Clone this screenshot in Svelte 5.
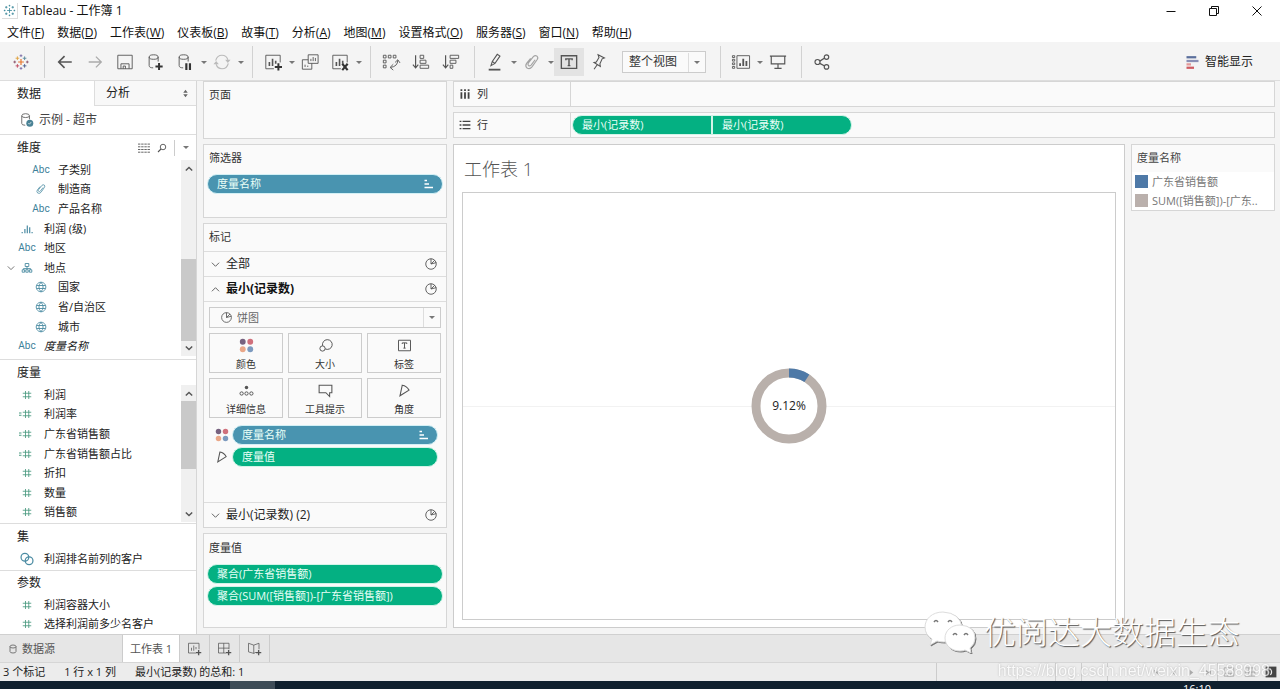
<script>
  const menus = [
    ['文件', 'F'], ['数据', 'D'], ['工作表', 'W'], ['仪表板', 'B'], ['故事', 'T'], ['分析', 'A'],
    ['地图', 'M'], ['设置格式', 'O'], ['服务器', 'S'], ['窗口', 'N'], ['帮助', 'H']
  ];
  const toolbar = [
    'logo', '|', 'back', 'forward', 'save', 'dbadd', 'dbpause', 'v', 'refresh', 'v', '|',
    'chartadd', 'v', 'duplicate', 'chartclear', 'v', '|', 'swap', 'sortasc', 'sortdesc', '|',
    'pen', 'v', 'clip', 'v', 'label', 'pin'
  ];
  const dimensions = [
    ['abc', '子类别', 1], ['clip', '制造商', 1], ['abc', '产品名称', 1], ['bins', '利润 (级)', 0],
    ['abc', '地区', 0], ['tree', '地点', 0], ['globe', '国家', 1], ['globe', '省/自治区', 1],
    ['globe', '城市', 1], ['abc', '度量名称', 0]
  ];
  const measures = [
    ['hash', '利润'], ['calc', '利润率'], ['calc', '广东省销售额'], ['calc', '广东省销售额占比'],
    ['hash', '折扣'], ['hash', '数量'], ['hash', '销售额']
  ];
  const marks = [
    ['colors', '颜色'], ['size', '大小'], ['text', '标签'],
    ['detail', '详细信息'], ['tooltip', '工具提示'], ['angle', '角度']
  ];
</script>

{#snippet icon(name)}
  <svg class="icon {name}" viewBox="0 0 20 20" aria-hidden="true">
    {#if name === 'logo'}
      <path stroke="#e8762d" stroke-width="1.3" d="M10 6.8v6.4M6.8 10h6.4" />
      <path stroke="#c14a60" d="M6 12.3v4M4 14.3h4" />
      <path stroke="#e0a23c" d="M6 3.8v4M4 5.8h4" />
      <path stroke="#59879b" d="M14 3.8v4M12 5.8h4" />
      <path stroke="#4c5c8c" d="M14 12.3v4M12 14.3h4" />
      <path stroke="#7a6aa5" d="M10 1.5v3M8.5 3h3M10 15.6v3M8.5 17.1h3" />
      <path stroke="#8a5168" d="M3 8.5v3M1.5 10h3M17 8.5v3M15.500 10h3" />
    {:else if name === 'back'}
      <path stroke-width="1.8" d="M17.500 10H3M9.500 3.500L3 10l6.500 6.500" />
    {:else if name === 'forward'}
      <path stroke="#aaa" stroke-width="1.400" d="M3 10h13.500M11 4l6 6-6 6" />
    {:else if name === 'save'}
      <path d="M2 2.500h16v15H2zM5.500 17.500v-5.500h9v5.500M8 17.500v-3h2.500v3" />
    {:else if name === 'dbadd' || name === 'dbpause'}
      <path d="M3.500 4.500v9.500q0 2.500 4.500 2.500M3.500 4.500q0-2.500 5-2.500t5 2.500q0 2.500-5 2.500t-5-2.500M13.500 4.500v5" />
      {#if name === 'dbadd'}
        <path stroke="#333" stroke-width="2.200" d="M14.500 11v8M10.500 15h8" />
      {:else}
        <path stroke="#333" stroke-width="2.400" d="M11.500 11.500v7.500M15.500 11.500v7.500" />
      {/if}
    {:else if name === 'refresh'}
      <path stroke="#bbb" stroke-width="1.300" d="M3 8.500Q4.500 2.500 10 2.500q5 0 6.500 5M17 11.500q-1.500 6-7 6-5 0-6.500-5" />
      <path fill="#bbb" stroke="none" d="M13.500 7.500h6l-3 3.500zM.5 12.500h6L3.500 9z" />
    {:else if name === 'chartadd' || name === 'chartclear'}
      <path d="M11 17.500H2V2.500h16v8" />
      <path stroke-width="1.800" d="M6 10v4.500M9.500 6.500v8M13 8.500V12" />
      {#if name === 'chartadd'}
        <path stroke="#333" stroke-width="2.200" d="M16 11.500v8M12 15.500h8" />
      {:else}
        <path stroke="#333" stroke-width="2.400" d="M12.500 12l6 7M18.500 12l-6 7" />
      {/if}
    {:else if name === 'duplicate'}
      <path d="M8 2h11v9.500H8zM8 7.500H1.500v10.500h10.500v-6.500M4.500 13v2.500M7.500 14v1.500M11 6.500V9M13.500 4.500V9M16 5.500V9" />
    {:else if name === 'swap'}
      <path d="M1.500 2.500h3v3h-3zM7 2.500h3v3H7zM12.500 2.500h3v3h-3zM1.500 8h3v3h-3zM1.500 13.500h3v3h-3zM17.500 8q0 7-8 8M14.500 10.500l3-3L20 11M12.500 12.500L9 16l3.500 3" />
    {:else if name === 'sortasc'}
      <path stroke-width="1.300" d="M4 2.500v14M1 13l3 3.500L7 13" />
      <path d="M9 2.500h4v3.500H9zM9 8h6.500v3.500H9zM9 13.500h9.500V17H9z" />
    {:else if name === 'sortdesc'}
      <path stroke-width="1.300" d="M4 2.500v14M1 13l3 3.500L7 13" />
      <path d="M9 2.500h9.500V6H9zM9 8h6.500v3.500H9zM9 13.500h3V17H9z" />
    {:else if name === 'pen'}
      <path stroke-width="1.200" d="M5.500 14l1.500-4.500L12.500 1.500l3 2L10 11.500zM7 9.500l3 2" />
      <path stroke-width="2" d="M3 18.500h13" />
    {:else if name === 'clip'}
      <path stroke-width="1.300" d="M13.500 7.500L9 13.500q-1.500 1.500-3 .3-1-1.300 0-2.800l5.500-7Q13.500 2 15.500 3.500q1.700 1.500.3 3.700L10 15.500q-2.500 3-5.500 1.200-2.500-2.200-.5-5.200L8.500 6" />
    {:else if name === 'label'}
      <path stroke-width="1.500" d="M1.500 3h17v14h-17z" />
      <path stroke-width="1.600" d="M6.500 8V6.500h7V8M10 6.500v7.500M8.500 14h3" />
    {:else if name === 'pin'}
      <path stroke-width="1.200" d="M9 2l7 3.500-2.500 1-2.500 5.500.5 3L4.500 10.500l2.500-.5 3-5zM8 13L4.500 18" />
    {:else if name === 'cards'}
      <path d="M5.500 3h14v14h-14zM.5 3H3v2H.5zM.5 7H3v2H.5zM.5 11H3v2H.5zM.5 15H3v2H.5z" />
      <path stroke-width="2" d="M9 11.500V14.500M12.500 6.500v8M16 9v5.500" />
    {:else if name === 'present'}
      <path stroke-width="1.300" d="M1 3.500h18M2.500 3.500v8.500h15V3.500M10 12v5M6 17h8" />
    {:else if name === 'share'}
      <circle cx="5" cy="10" r="2.800" stroke-width="1.300" /><circle cx="15" cy="4.500" r="2.500" stroke-width="1.300" /><circle cx="15" cy="15.500" r="2.500" stroke-width="1.300" />
      <path stroke-width="1.400" d="M7.500 9L13 5.500M7.500 11.500l5.500 3" />
    {:else if name === 'smart'}
      <path stroke="#5b6f9c" stroke-width="3" d="M2 3h13" />
      <path stroke="#8a8fb5" stroke-width="3" d="M2 8h16" />
      <path stroke="#e39a9a" stroke-width="3" d="M2 12.500h6" />
      <path stroke="#cf5b62" stroke-width="3" d="M2 17h10" />
    {:else if name === 'source'}
      <path stroke="#666" stroke-width="1.300" d="M2.500 4v11q0 2.500 5 2.500M2.500 4q0-3 5.500-3t5.500 3q0 2.500-5.500 2.500T2.500 4M13.500 4v5" />
      <circle cx="14" cy="14.500" r="5" fill="#4a8295" stroke="none" /><path stroke="#fff" d="M12 14.500l1.500 1.500 2.500-3" />
    {:else if name === 'bins'}
      <path stroke-width="2" d="M6.500 10v7M10.500 4v13M14.500 7v10M2 15.200V17M18.500 15.200V17" />
    {:else if name === 'tree'}
      <path stroke-width="1.500" d="M7 2.500h6v5H7zM10 7.500V11M4 13v-2h12v2M2 13h4v4H2zM8 13h4v4H8zM14 13h4v4h-4zM10 11v2" />
    {:else if name === 'globe'}
      <path stroke-width="1.500" d="M10 2a8 8 0 1 0 .1 0M2.500 7.500h15M2.500 12.500h15M10 2Q3 10 10 18M10 2q7 8 0 16" />
    {:else if name === 'hash' || name === 'calc'}
      <path stroke-width="1.700" d="M7 2v16M13.500 2v16M1.500 6.500h17M1.500 13.500h17" />
      {#if name === 'calc'}<path stroke-width="2" d="M-6 8h5M-6 12.500h5" />{/if}
    {:else if name === 'set'}
      <circle cx="7" cy="7.500" r="5.500" stroke-width="1.800" /><circle cx="13" cy="12.500" r="5.500" stroke-width="1.800" />
    {:else if name === 'pie'}
      <circle cx="10" cy="10" r="7.500" stroke-width="1.300" /><path stroke-width="1.300" d="M10 2.500V10l5.500-5.500M10 10l7.500-2" />
    {:else if name === 'colors'}
      <circle cx="5" cy="5" r="3.900" fill="#77627f" stroke="none" /><circle cx="15" cy="5" r="3.900" fill="#d0707c" stroke="none" />
      <circle cx="5" cy="15" r="3.900" fill="#eaa788" stroke="none" /><circle cx="15" cy="15" r="3.900" fill="#7c9abf" stroke="none" />
    {:else if name === 'size'}
      <path stroke-width="1.300" d="M6.200 10.500A6.500 6.500 0 1 1 9.500 14.500" /><circle cx="6" cy="14" r="3.500" stroke-width="1.300" />
    {:else if name === 'text'}
      <path stroke-width="1.300" d="M2 3h16v14H2zM7 8V6.500h6V8M10 6.500v7M8.500 13.500h3" />
    {:else if name === 'detail'}
      <circle cx="10" cy="6" r="2.300" fill="#555" stroke="none" />
      <circle cx="3.500" cy="14" r="2.200" stroke-width="1.300" /><circle cx="10" cy="14" r="2.200" stroke-width="1.300" /><circle cx="16.500" cy="14" r="2.200" stroke-width="1.300" />
    {:else if name === 'tooltip'}
      <path stroke-width="1.400" d="M1.500 3h17v10h-3v5l-5-5h-9z" />
    {:else if name === 'angle'}
      <path stroke-width="1.500" d="M7 3L4 17 16 9.500Q13 4 7 3z" />
    {:else if name === 'sorted'}
      <path stroke="#fff" stroke-width="3" d="M3 3h5M3 10h9M3 17h17" />
    {:else if name === 'columns'}
      <path stroke="#444" stroke-width="3" d="M4 7v11M10 7v11M16 7v11M4 2v3M10 2v3M16 2v3" />
    {:else if name === 'rows'}
      <path stroke="#444" stroke-width="2.200" d="M6 4h13M6 10h13M6 16h13M1 4h3M1 10h3M1 16h3" />
    {:else if name === 'grid'}
      <path stroke-width="1.500" stroke-dasharray="4 1.300" d="M0 3.500h20M0 8h20M0 12.500h20M0 17h20" />
    {:else if name === 'find'}
      <circle cx="12" cy="8" r="5.500" stroke-width="1.800" /><path stroke-width="2.200" d="M8 12l-6 6" />
    {:else if name === 'updown'}
      <path fill="#666" stroke="none" d="M5 8.500l5-7 5 7zM5 11.500h10l-5 7z" />
    {:else if name === 'down'}
      <path stroke-width="2" d="M2 6l8 8 8-8" />
    {:else if name === 'up'}
      <path stroke-width="2" d="M2 14l8-8 8 8" />
    {:else if name === 'cylinder'}
      <path stroke-width="1.500" d="M4 5v10q0 3 6 3t6-3V5q0-3-6-3T4 5q0 3 6 3t6-3" />
    {:else if name === 'newsheet'}
      <path d="M12 16H2V3h14v8M6 9v4M9 6v7M12 8v3" /><path stroke-width="1.800" d="M15.500 12v7M12 15.500h7" />
    {:else if name === 'newdash'}
      <path d="M12 16H2V3h14v8M9 3v13M2 9.500h14" /><path stroke-width="1.800" d="M15.500 12v7M12 15.500h7" />
    {:else if name === 'newstory'}
      <path d="M12 15l-3 1.500L2 14.500V3l7 2.500L16 3v8M9 5.500v11" /><path stroke-width="1.800" d="M15.500 12v7M12 15.500h7" />
    {:else if name === 'first'}
      <path fill="#aaa" stroke="none" d="M3 3h3v14H3zM17 3v14L7 10z" />
    {:else if name === 'previous'}
      <path fill="#aaa" stroke="none" d="M15 2v16L5 10z" />
    {:else if name === 'next'}
      <path fill="#aaa" stroke="none" d="M5 2v16l10-8z" />
    {:else if name === 'final'}
      <path fill="#aaa" stroke="none" d="M14 3h3v14h-3zM3 3v14l10-7z" />
    {:else if name === 'sorter'}
      <path stroke="#888" d="M2 3h16v14H2zM2 10h16M8 3v14M13 3v14" />
    {:else if name === 'film'}
      <path stroke="#888" d="M2 3h16v14H2zM2 12h16M8 12v5M13 12v5" />
    {:else if name === 'stack'}
      <path stroke="none" fill="#444" d="M1 1h18v18H1z" /><path stroke="#eee" stroke-width="2" d="M3 5h6q4 5 0 10" />
    {/if}
  </svg>
{/snippet}

{#snippet scroller(before, thumb, after)}
  <div class="scroller">
    {@render icon('up')}
    <div class="track">
      <span style:flex-grow={before}></span>
      <span class="thumb" style:flex-grow={thumb}></span>
      <span style:flex-grow={after}></span>
    </div>
    {@render icon('down')}
  </div>
{/snippet}

{#snippet field(kind, name, nested)}
  <li class:nested class:italic={name === '度量名称'}>
    {#if kind === 'tree'}<span class="expander">{@render icon('down')}</span>{/if}
    <span class="kind" class:green={kind === 'hash' || kind === 'calc'}>
      {#if kind === 'abc'}Abc{:else}{@render icon(kind)}{/if}
    </span>
    {name}
  </li>
{/snippet}

<div class="app">
  <header class="title">
    <span class="appicon">
      <svg viewBox="0 0 16 16" aria-hidden="true"><path stroke="#3f8a9c" d="M8 5v6M5 8h6M4 2.500v3M2.500 4h3M12 2.500v3M10.500 4h3M4 10.500v3M2.500 12h3M12 10.500v3M10.500 12h3M8 1v2M7 2h2M8 13v2M7 14h2M2 7v2M1 8h2M14 7v2M13 8h2" /></svg>
    </span>
    <span>Tableau - 工作簿 1</span>
    <div class="window">
      <button aria-label="最小化"><svg viewBox="0 0 12 12"><path d="M1.500 6.500h9" /></svg></button>
      <button aria-label="还原"><svg viewBox="0 0 12 12"><path d="M1.500 3.500h7v7h-7zM3.500 3.500v-2h7v7h-2" /></svg></button>
      <button aria-label="关闭"><svg viewBox="0 0 12 12"><path d="M1.500 1.500l9 9M10.500 1.500l-9 9" /></svg></button>
    </div>
  </header>

  <nav class="menu">
    {#each menus as [name, key]}
      <button>{name}(<u>{key}</u>)</button>
    {/each}
  </nav>

  <div class="toolbar">
    {#each toolbar as item}
      {#if item === '|'}
        <span class="sep"></span>
      {:else if item === 'v'}
        <span class="caret"></span>
      {:else}
        <button class="tool" class:active={item === 'label'} class:faded={item === 'clip'} aria-label={item}>{@render icon(item)}</button>
      {/if}
    {/each}
    <div class="select fit">
      <select aria-label="适合"><option>整个视图</option></select>
      <span class="caret"></span>
    </div>
    <span class="sep wide"></span>
    <button class="tool" aria-label="显示/隐藏功能区">{@render icon('cards')}</button>
    <span class="caret"></span>
    <button class="tool" aria-label="演示模式">{@render icon('present')}</button>
    <span class="sep"></span>
    <button class="tool" aria-label="共享">{@render icon('share')}</button>
    <button class="smartshow">{@render icon('smart')}智能显示</button>
  </div>

  <div class="workspace">
    <aside class="data">
      <div class="panes">
        <button class="on">数据</button>
        <button>分析 {@render icon('updown')}</button>
      </div>
      <div class="datasource">{@render icon('source')}示例 - 超市</div>
      <section class="dims">
        <div class="heading">
          <h2>维度</h2>
          <span class="tools">{@render icon('grid')}{@render icon('find')}<i></i><span class="caret"></span></span>
        </div>
        <div class="list">
          <ul>
            {#each dimensions as [kind, name, nested]}{@render field(kind, name, !!nested)}{/each}
          </ul>
          {@render scroller(83, 83, 0)}
        </div>
      </section>
      <section class="meas">
        <div class="heading"><h2>度量</h2></div>
        <div class="list">
          <ul>
            {#each measures as [kind, name]}{@render field(kind, name, false)}{/each}
          </ul>
          {@render scroller(0, 67, 38)}
        </div>
      </section>
      <section class="sets">
        <div class="heading"><h2>集</h2></div>
        <div class="list"><ul>{@render field('set', '利润排名前列的客户', false)}</ul></div>
      </section>
      <section class="params">
        <div class="heading"><h2>参数</h2></div>
        <div class="list">
          <ul>
            {@render field('hash', '利润容器大小', false)}
            {@render field('hash', '选择利润前多少名客户', false)}
          </ul>
        </div>
      </section>
    </aside>

    <div class="shelves">
      <section class="card pages"><h3>页面</h3></section>
      <section class="card filters">
        <h3>筛选器</h3>
        <button class="pill blue">度量名称{@render icon('sorted')}</button>
      </section>
      <section class="card marks">
        <h3>标记</h3>
        <button class="layer">{@render icon('down')}全部{@render icon('pie')}</button>
        <button class="layer current">{@render icon('up')}最小(记录数){@render icon('pie')}</button>
        <div class="body">
          <div class="select type">
            {@render icon('pie')}
            <select aria-label="标记类型"><option>饼图</option></select>
            <span class="caret"></span>
          </div>
          <div class="buttons">
            {#each marks as [kind, name]}
              <button>{@render icon(kind)}{name}</button>
            {/each}
          </div>
          <div class="encodings">
            <div>{@render icon('colors')}<button class="pill blue">度量名称{@render icon('sorted')}</button></div>
            <div>{@render icon('angle')}<button class="pill">度量值</button></div>
          </div>
        </div>
        <button class="layer">{@render icon('down')}最小(记录数) (2){@render icon('pie')}</button>
      </section>
      <section class="card values">
        <h3>度量值</h3>
        <button class="pill">聚合(广东省销售额)</button>
        <button class="pill">聚合(SUM([销售额])-[广东省销售额])</button>
      </section>
    </div>

    <main>
      <div class="shelf"><span class="name">{@render icon('columns')}列</span></div>
      <div class="shelf">
        <span class="name">{@render icon('rows')}行</span>
        <button class="pill start">最小(记录数)</button>
        <button class="pill end">最小(记录数)</button>
      </div>
      <div class="view">
        <section class="sheet">
          <h1>工作表 1</h1>
          <div class="pane">
            <svg class="donut" viewBox="0 0 76 76" role="img" aria-label="9.12%">
              <circle class="rest" cx="38" cy="38" r="33" />
              <circle class="slice" cx="38" cy="38" r="33" pathLength="100" transform="rotate(-90 38 38)" />
              <text x="38" y="42" text-anchor="middle">9.12%</text>
            </svg>
          </div>
        </section>
        <aside class="legend">
          <h3>度量名称</h3>
          <ul>
            <li><i class="navy"></i>广东省销售额</li>
            <li><i class="taupe"></i>SUM([销售额])-[广东..</li>
          </ul>
        </aside>
      </div>
    </main>
  </div>

  <footer>
    <div class="tabs">
      <button class="origin">{@render icon('cylinder')}数据源</button>
      <button class="on">工作表 1</button>
      <button class="new" aria-label="新建工作表">{@render icon('newsheet')}</button>
      <button class="new" aria-label="新建仪表板">{@render icon('newdash')}</button>
      <button class="new" aria-label="新建故事">{@render icon('newstory')}</button>
    </div>
    <div class="status">
      <span>3 个标记</span><span>1 行 x 1 列</span><span>最小(记录数) 的总和: 1</span>
      <div class="nav">
        <b class="user"></b><b></b><b></b>
        <b class="arrows">{@render icon('first')}{@render icon('previous')}{@render icon('next')}{@render icon('final')}</b>
        <b class="modes">{@render icon('film')}{@render icon('sorter')}{@render icon('stack')}</b>
      </div>
    </div>
    <div class="taskbar"><span class="task"></span><time>16:10</time></div>
  </footer>

  <div class="brand">
    <svg viewBox="0 0 52 42" aria-hidden="true">
      <path d="M19 1C8 1 1 8 1 16q0 8 7 12l-2 6 7-4q3 1 7 1 17-1 18-15Q36 2 19 1z" />
      <path d="M36 14c-9 0-15 6-15 13s6 13 15 13q3 0 5-1l6 3-1-5q5-4 5-10 0-12-15-13z" />
      <path class="eyes" d="M10 11q2-3 4 0M24 11q2-3 4 0M29 24q2-3 4 0M40 24q2-3 4 0" />
    </svg>
    <span>优阅达大数据生态</span>
  </div>
  <div class="url">https://blog.csdn.net/weixin_45588998</div>
</div>

<style>
  :global(body) { margin: 0; }
  * { box-sizing: border-box; }
  .app {
    position: relative;
    display: flex;
    flex-direction: column;
    height: 100vh;
    overflow: hidden;
    background: #f4f4f4;
    color: #333;
    font: 11px/16px "Open Sans", "Noto Sans CJK SC", sans-serif;
  }
  button, select { margin: 0; padding: 0; border: 0; background: none; color: inherit; font: inherit; }
  h1, h2, h3, ul { margin: 0; padding: 0; font-weight: 400; list-style: none; }
  svg { flex: none; fill: none; stroke: #555; }
  .icon { display: block; width: 12px; height: 12px; overflow: visible; }

  .title { display: flex; align-items: center; height: 22px; gap: 4px; padding-left: 2px; background: #fff; color: #111; font-size: 12px; }
  .appicon { display: flex; padding: 1px; border: solid #ddd; border-width: 0 1px 1px 0; }
  .appicon svg { width: 13px; height: 13px; }
  .window { display: flex; margin-left: auto; padding-right: 2px; }
  .window button { display: flex; justify-content: center; align-items: center; width: 43px; height: 20px; }
  .window svg { width: 12px; height: 12px; stroke: #111; }

  .menu { display: flex; gap: 13px; height: 20px; padding: 1px 0 0 7px; background: #fff; color: #111; white-space: nowrap; }
  .menu button { font-size: 12px; }
  .toolbar { display: flex; align-items: center; height: 39px; padding: 2px 0 0 6px; border-bottom: 1px solid #ddd; }
  .tool { display: flex; justify-content: center; align-items: center; width: 30px; height: 28px; }
  .tool .icon { width: 18px; height: 18px; }
  .tool.active { background: #e3e3e3; }
  .tool.faded { opacity: .5; }
  .caret { display: flex; justify-content: center; width: 7px; }
  .caret::after { content: ""; border: solid transparent; border-width: 3px 3px 0; border-top-color: #777; }
  .sep { width: 1px; height: 32px; margin: 0 5px 0 8px; background: #d2d2d2; }
  .sep.wide { margin-left: 14px; }
  .select { display: flex; align-items: center; border: 1px solid #ccc; background: #fafafa; }
  .select select { flex: 1; align-self: stretch; min-width: 0; appearance: none; }
  .select > .caret { width: 17px; height: 19px; align-items: center; border-left: 1px solid #ddd; }
  .fit { width: 84px; height: 22px; margin-left: 8px; padding-left: 6px; font-size: 12px; }
  .smartshow { display: flex; align-items: center; gap: 5px; margin-left: auto; padding-right: 27px; color: #222; font-size: 12px; }
  .smartshow .icon { width: 15px; height: 15px; }

  .workspace { display: flex; flex: 1; gap: 6px; min-height: 0; padding-right: 5px; }
  .data { display: flex; flex-direction: column; width: 197px; background: #fff; border-right: 1px solid #d6d6d6; color: #222; }
  .panes { display: flex; height: 25px; font-size: 12px; }
  .panes button { flex: 1; padding-left: 11px; border: solid #ddd; border-width: 0 0 1px 1px; background: #f8f8f8; text-align: left; display: flex; align-items: center; }
  .panes .on { padding-left: 17px; background: #fff; border: 0; flex: 0 0 94px; }
  .panes .icon { width: 9px; height: 9px; margin: 0 6px 0 auto; }
  .datasource { display: flex; align-items: center; gap: 5px; height: 28px; padding-left: 20px; font-size: 12px; color: #444; }
  .datasource .icon { width: 14px; height: 14px; }
  .data section { display: flex; flex-direction: column; min-height: 0; border-top: 1px solid #ddd; }
  .data .dims { flex: 10 0 29px; padding-bottom: 3px; }
  .data .meas { flex: 7 0 27px; padding-bottom: 1px; }
  .data .sets { flex: 1 0 27px; padding-bottom: 1px; }
  .data .params { flex: 2 0 25px; }
  .heading { display: flex; justify-content: space-between; align-items: center; height: 25px; padding-left: 17px; }
  h2 { font-size: 12px; }
  .tools { display: flex; align-items: center; gap: 7px; padding-right: 7px; }
  .tools i { width: 1px; height: 16px; background: #ccc; }
  .tools .find { width: 10px; height: 10px; }
  .list { display: flex; flex: 1; min-height: 0; }
  .list ul { display: flex; flex: 1; flex-direction: column; }
  .list li { position: relative; display: flex; flex: 1; align-items: center; min-height: 0; padding-left: 17px; gap: 7px; white-space: nowrap; }
  .list .nested { padding-left: 31px; }
  .italic { font-style: italic; }
  .kind { display: flex; justify-content: center; width: 20px; color: #3c7f99; font: 10px/16px Roboto, sans-serif; }
  .kind .icon { stroke: #4c8ca3; }
  .kind .set { width: 14px; height: 14px; }
  .kind.green .icon { width: 10px; height: 10px; stroke: #4a9a80; }
  .expander { position: absolute; left: 7px; }
  .expander .icon { width: 8px; height: 8px; }
  .scroller { display: flex; flex-direction: column; align-items: center; width: 15px; padding: 5px 0 4px; background: #f0f0f0; }
  .scroller .icon { width: 8px; height: 8px; }
  .scroller :global(path) { stroke-width: 3.500; }
  .track { display: flex; flex: 1; flex-direction: column; align-self: stretch; padding: 3px 0; }
  .thumb { background: #c9c9c9; }

  .shelves { display: flex; flex-direction: column; gap: 5px; width: 244px; padding-bottom: 6px; }
  .card { display: flex; flex-direction: column; border: 1px solid #d6d6d6; background: #fafafa; }
  h3 { font-size: 11px; line-height: 16px; padding: 5px; }
  .pages { height: 58px; }
  .filters { height: 74px; }
  .filters h3 { padding-bottom: 8px; }
  .marks { flex: 1; }
  .values { height: 95px; gap: 2px; }
  .values h3 { padding: 6px 5px; }
  .pill { display: flex; align-items: center; justify-content: space-between; height: 20px; margin: 0 3px; padding: 0 9px; border: 1px solid #d2f4e8; border-radius: 10px; background: #04b082; color: #e9fff7; white-space: nowrap; }
  .pill.blue { background: #4994b0; border-color: #d3f0f5; }
  .pill .icon { width: 10px; height: 10px; }
  .marks h3 { height: 27px; }
  .layer { display: flex; align-items: center; height: 25px; gap: 6px; padding: 0 8px 0 7px; border-top: 1px solid #ddd; color: #222; font-size: 12px; text-align: left; }
  .layer .icon { width: 9px; height: 9px; }
  .layer .pie { width: 14px; height: 14px; margin-left: auto; }
  .layer.current { font-weight: 700; color: #111; }
  .body { flex: 1; padding: 5px; border-top: 1px solid #ddd; }
  .type { height: 21px; padding-left: 10px; gap: 4px; color: #666; }
  .type .icon { width: 13px; height: 13px; }
  .buttons { display: grid; grid-template-columns: repeat(3, 1fr); gap: 5px; padding: 5px 0 7px; }
  .buttons button { display: flex; flex-direction: column; align-items: center; justify-content: space-between; height: 40px; padding: 4px 0 1px; border: 1px solid #ccc; font-size: 10px; line-height: 14px; }
  .buttons .icon { width: 15px; height: 15px; }
  .encodings { display: grid; gap: 2px; }
  .encodings div { display: flex; align-items: center; padding-left: 6px; }
  .encodings div > .icon { width: 14px; height: 14px; }
  .encodings .pill { flex: 1; }

  main { display: flex; flex: 1; flex-direction: column; gap: 5px; min-width: 0; }
  .shelf { display: flex; align-items: center; height: 26px; border: 1px solid #d6d6d6; background: #fafafa; }
  .name { display: flex; align-items: center; align-self: stretch; gap: 6px; width: 117px; padding-left: 5px; border-right: 1px solid #d6d6d6; }
  .shelf .pill { width: 140px; }
  .shelf .start { margin: 0 0 0 1px; border-radius: 10px 0 0 10px; }
  .shelf .end { margin: 0; border-radius: 0 10px 10px 0; }
  .view { display: flex; flex: 1; align-items: start; gap: 6px; margin-top: 1px; }
  .sheet { display: flex; flex: 1; flex-direction: column; align-self: stretch; margin-bottom: 6px; padding: 11px 8px 7px; border: 1px solid #ccc; background: #fff; }
  h1 { padding: 0 2px; color: #555; font-size: 18px; line-height: 26px; font-weight: 300; }
  .pane { display: flex; flex: 1; justify-content: center; align-items: center; margin-top: 10px; border: 1px solid #ccc; background: linear-gradient(#f2f2f2, #f2f2f2) center / 100% 1px no-repeat; }
  .donut { width: 76px; height: 76px; }
  .donut circle { stroke-width: 9; }
  .rest { fill: #fff; stroke: #b9b0ab; }
  .slice { stroke: #4e79a7; stroke-dasharray: 9.12 100; }
  .donut text { fill: #222; stroke: none; font-size: 12px; }
  .legend { width: 144px; border: 1px solid #d6d6d6; background: #fafafa; color: #777; }
  .legend h3 { padding-bottom: 6px; color: #444; }
  .legend ul { background: #fff; }
  .legend li { display: flex; align-items: center; gap: 4px; height: 19px; padding-left: 3px; white-space: nowrap; }
  .legend i { flex: none; width: 13px; height: 13px; }
  .navy { background: #4e79a7; }
  .taupe { background: #bab0ac; }

  .tabs { display: flex; height: 28px; border-top: 1px solid #d0d0d0; background: #e6e6e6; color: #555; }
  .tabs button { display: flex; justify-content: center; align-items: center; border-right: 1px solid #ccc; }
  .tabs .origin { justify-content: start; gap: 4px; width: 123px; padding-left: 8px; }
  .origin .icon { width: 10px; }
  .tabs .on { width: 57px; background: #fff; }
  .tabs .new { width: 30px; }
  .new .icon { width: 15px; height: 15px; }
  .status { display: flex; align-items: center; gap: 19px; height: 19px; padding-left: 3px; border-top: 1px solid #d6d6d6; background: #ececec; color: #222; font-size: 11px; }
  .nav { display: flex; align-self: stretch; margin-left: auto; }
  .nav b { display: flex; align-items: center; width: 26px; border-left: 1px solid #ccc; }
  .nav .user { width: 119px; }
  .nav .arrows { justify-content: space-around; width: 110px; padding-left: 40px; }
  .arrows .icon { width: 7px; height: 7px; }
  .nav .modes { gap: 9px; width: 63px; padding-left: 5px; }
  .taskbar { display: flex; height: 8px; overflow: hidden; background: #10202e; }
  .task { width: 45px; margin-left: 230px; background: #3e4c57; }
  time { margin: 0 69px 0 auto; color: #fff; font-size: 11px; }

  .brand { position: absolute; right: 40px; bottom: 35px; display: flex; align-items: center; gap: 8px; color: #fff; font-size: 32px; line-height: 44px; font-weight: 300; text-shadow: 1px 1px 1px #555; white-space: nowrap; }
  .brand svg { width: 52px; height: 42px; fill: #fff; stroke: #ddd; filter: drop-shadow(1px 1px 0 #777); }
  .brand .eyes { fill: none; stroke: #777; stroke-width: 1.500; }
  .url { position: absolute; right: 10px; bottom: 8px; color: #fff; font: 16px/20px "Liberation Sans", sans-serif; text-shadow: 0 0 2px #999; opacity: .75; }
</style>
